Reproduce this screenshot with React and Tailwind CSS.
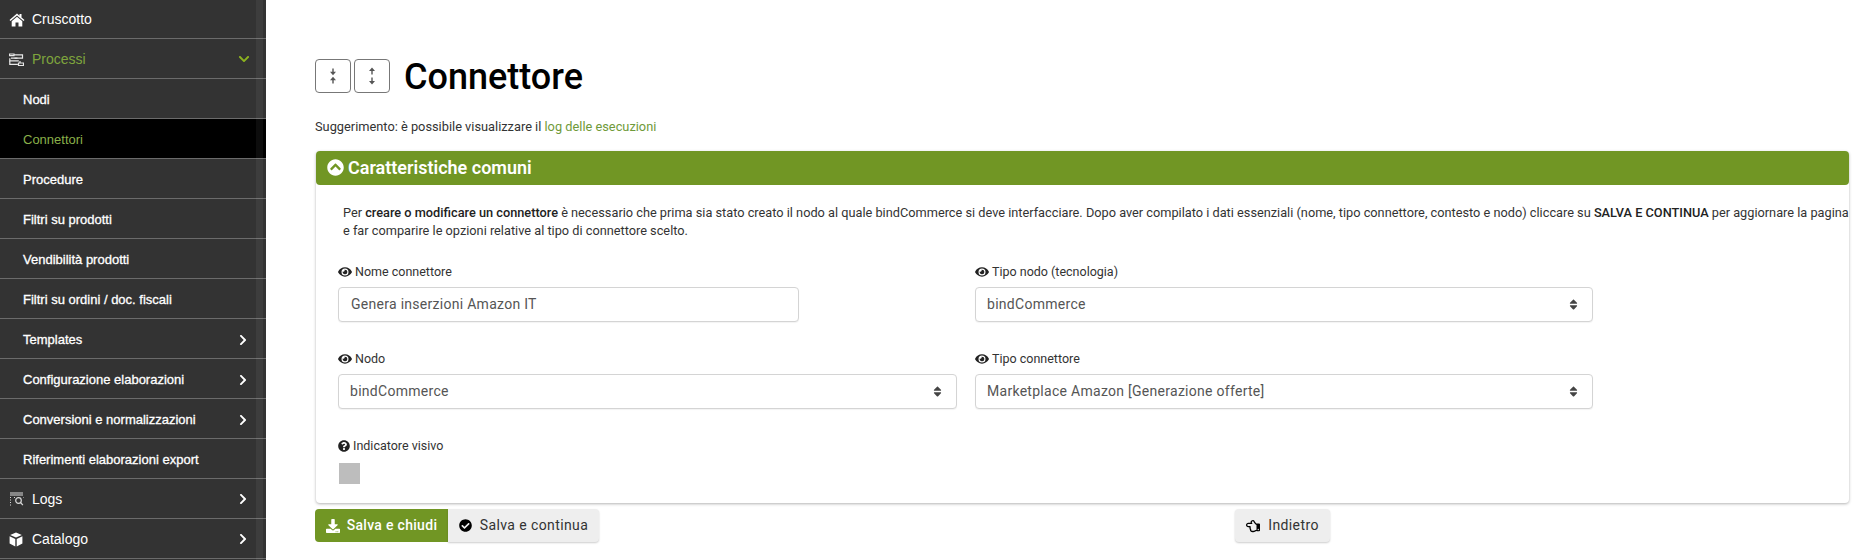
import React from 'react';
import { FaChevronDown, FaChevronRight, FaChevronCircleUp, FaEye, FaQuestionCircle, FaDownload, FaCheckCircle, FaRegHandPointLeft, FaSort } from 'react-icons/fa';

const HomeIcon = () => (
  <svg width="16" height="14" viewBox="0 0 16 14" fill="white">
    <path d="M8 0.5L0.5 7l1 1L8 2.6 14.5 8l1-1-3-2.6V1h-2v1.7zM2.7 8.2V13.5h3.8V9.5h3v4h3.8V8.2L8 3.8z" />
  </svg>
);

const ProcessIcon = () => (
  <svg width="15" height="13" viewBox="0 0 15 13" fill="none" stroke="#e8e8e8" strokeWidth="1.2">
    <path d="M0.5 1h4.5v1.6H0.5zM5 1.8h8.5v3.4H2" />
    <path d="M0.8 5.2v2.6h9" />
    <path d="M5.5 5.2h3" />
    <path d="M0.8 7.8v3.6h8M9.5 10h5v2.5h-5zM11 8v2" />
  </svg>
);

const LogsIcon = () => (
  <svg width="15" height="14" viewBox="0 0 15 14" fill="none" stroke="#d9d9d9" strokeWidth="1.2">
    <path d="M1 1h13M1 3h13" />
    <path d="M1 5.5h2M1 8h2M1 10.5h2M1 13h2" strokeDasharray="1 1" />
    <path d="M5 5.5h1M14 5.5h0.5" />
    <circle cx="9.5" cy="8.5" r="2.8" />
    <path d="M11.5 10.5l2.4 2.6" />
  </svg>
);

const BoxIcon = () => (
  <svg width="14" height="15" viewBox="0 0 14 15" fill="white">
    <path d="M7 0.5L12.8 3 7 5.6 1.2 3z" />
    <path d="M0.6 4.3L6.3 6.9V14.5L0.6 11.6zM13.4 4.3L7.7 6.9V14.5L13.4 11.6z" />
  </svg>
);

const CollapseIcon = () => (
  <svg width="10" height="18" viewBox="0 0 10 18" fill="#555">
    <path d="M4.3 1.5h1.4v3.2H8L5 8.3 2 4.7h2.3zM5 9.7l3 3.6H5.7v3.2H4.3v-3.2H2z" />
  </svg>
);

const ExpandIcon = () => (
  <svg width="10" height="18" viewBox="0 0 10 18" fill="#555">
    <path d="M5 0.5l3 3.6H5.7v3.4H4.3V4.1H2zM5 17.5l-3-3.6h2.3v-3.4h1.4v3.4H8z" />
  </svg>
);

const menu = [
  { label: 'Cruscotto', icon: <HomeIcon />, top: true, first: true },
  { label: 'Processi', icon: <ProcessIcon />, top: true, open: true },
  { label: 'Nodi' },
  { label: 'Connettori', active: true },
  { label: 'Procedure' },
  { label: 'Filtri su prodotti' },
  { label: 'Vendibilità prodotti' },
  { label: 'Filtri su ordini / doc. fiscali' },
  { label: 'Templates', arrow: true },
  { label: 'Configurazione elaborazioni', arrow: true },
  { label: 'Conversioni e normalizzazioni', arrow: true },
  { label: 'Riferimenti elaborazioni export' },
  { label: 'Logs', icon: <LogsIcon />, top: true, arrow: true },
  { label: 'Catalogo', icon: <BoxIcon />, top: true, arrow: true },
];

const MenuRow = ({ item }) => (
  <div
    className={`flex items-center border-b border-[#6b6b6b] shrink-0 ${item.top ? 'pt-[1px]' : 'pt-[2px]'} ${item.first ? 'h-[39px]' : 'h-[40px]'} ${item.active ? 'bg-black' : ''}`}
  >
    {item.top ? (
      <>
        <span className="w-[32px] pl-[9px] flex items-center shrink-0">{item.icon}</span>
        <span className={`text-[14px] ${item.open ? 'text-[#7fa53d]' : 'text-white'}`}>{item.label}</span>
      </>
    ) : (
      <span className={`pl-[23px] text-[13px] ${item.active ? 'text-[#8ab04a]' : 'text-white [-webkit-text-stroke:0.3px_white]'}`}>
        {item.label}
      </span>
    )}
    {item.open && <FaChevronDown className="ml-auto mr-[16px] text-[12px] text-[#8cb21f]" />}
    {item.arrow && <FaChevronRight className="ml-auto mr-[17px] text-[12px] text-white" />}
  </div>
);

const Sidebar = () => (
  <div className="relative w-[266px] h-[560px] overflow-hidden shrink-0 bg-[#333333] flex flex-col font-['Liberation_Sans',sans-serif]">
    {menu.map((item) => (
      <MenuRow key={item.label} item={item} />
    ))}
    <div className="absolute top-0 bottom-0 right-[3px] w-[7px] bg-white/5" />
  </div>
);

const Label = ({ icon, children }) => (
  <div className="flex items-center gap-[3px] h-[16px] text-[12.5px] text-[#333]">
    {icon === 'help' ? <FaQuestionCircle className="text-[12px] text-[#222]" /> : <FaEye className="text-[14px] text-[#222]" />}
    {children}
  </div>
);

const boxClass = 'h-[35px] bg-white border border-[#d4d4d4] rounded-[4px] flex items-center text-[14px] tracking-[0.28px] text-[#555] shadow-[0_1px_1px_rgba(0,0,0,0.05)]';

const SelectBox = ({ value }) => (
  <div className={`${boxClass} w-full pl-[11px] pr-[12px] justify-between`}>
    <span>{value}</span>
    <FaSort className="text-[13px] text-[#444]" />
  </div>
);

export default function App() {
  return (
    <div className="flex w-[1871px] h-[560px] overflow-hidden bg-white font-['Roboto',sans-serif]">
      <Sidebar />
      <div className="flex-1 min-w-0 pl-[49px] pr-[22px] pt-[58px]">
        <div className="flex items-center h-[35px]">
          <button className="w-[36px] h-[34px] border border-[#777] rounded-[4px] flex items-center justify-center">
            <CollapseIcon />
          </button>
          <button className="w-[36px] h-[34px] ml-[3px] border border-[#777] rounded-[4px] flex items-center justify-center">
            <ExpandIcon />
          </button>
          <h1 className="ml-[14px] mt-[2px] text-[36px] font-medium text-black leading-none">Connettore</h1>
        </div>

        <p className="mt-[26px] text-[12.8px] leading-[16px] text-[#333]">
          Suggerimento: è possibile visualizzare il <span className="text-[#6f9a3a]">log delle esecuzioni</span>
        </p>

        <div className="mt-[16px] ml-[1px] rounded-[4px] shadow-[0_1px_3px_rgba(0,0,0,0.3)] h-[352px]">
          <div className="h-[34px] pb-[2px] bg-[#719624] rounded-[4px] flex items-center pl-[11px] gap-[4px] text-white">
            <FaChevronCircleUp className="text-[17px]" />
            <span className="text-[18px] font-semibold">Caratteristiche comuni</span>
          </div>
          <div className="pl-[22px] pt-[19px]">
            <p className="pl-[5px] text-[12.75px] leading-[18px] text-[#333] whitespace-nowrap">
              Per <b className="font-medium text-[#222]">creare o modificare un connettore</b> è necessario che prima sia stato creato il nodo al quale bindCommerce si deve interfacciare. Dopo aver compilato i dati essenziali (nome, tipo connettore, contesto e nodo) cliccare su <b className="font-medium text-[#222]">SALVA E CONTINUA</b> per aggiornare la pagina
              <br />e far comparire le opzioni relative al tipo di connettore scelto.
            </p>

            <div className="mt-[24px] grid grid-cols-[619px_618px] gap-x-[18px] gap-y-[29px]">
              <div>
                <Label>Nome connettore</Label>
                <div className={`${boxClass} w-[461px] mt-[7px] pl-[12px]`}>Genera inserzioni Amazon IT</div>
              </div>
              <div>
                <Label>Tipo nodo (tecnologia)</Label>
                <div className="mt-[7px]">
                  <SelectBox value="bindCommerce" />
                </div>
              </div>
              <div>
                <Label>Nodo</Label>
                <div className="mt-[7px]">
                  <SelectBox value="bindCommerce" />
                </div>
              </div>
              <div>
                <Label>Tipo connettore</Label>
                <div className="mt-[7px]">
                  <SelectBox value="Marketplace Amazon [Generazione offerte]" />
                </div>
              </div>
            </div>

            <div className="mt-[29px]">
              <Label icon="help">Indicatore visivo</Label>
              <div className="mt-[9px] ml-[1px] w-[21px] h-[21px] bg-[#bdbdbd]" />
            </div>
          </div>
        </div>

        <div className="mt-[6px] flex items-start">
          <button className="h-[33px] w-[133px] bg-[#719624] rounded-l-[4px] flex items-center justify-center gap-[7px] text-[14px] tracking-[0.3px] font-medium text-white">
            <FaDownload className="text-[14px]" />
            Salva e chiudi
          </button>
          <button className="h-[33px] w-[151px] bg-[#eeeeee] rounded-r-[4px] flex items-center justify-center gap-[8px] text-[14px] tracking-[0.4px] text-[#333] shadow-[0_1px_2px_rgba(0,0,0,0.2)]">
            <FaCheckCircle className="text-[13px] text-black" />
            Salva e continua
          </button>
          <button className="ml-[636px] h-[33px] w-[95px] bg-[#eeeeee] rounded-[4px] flex items-center justify-center gap-[8px] text-[14px] tracking-[0.4px] text-[#333] shadow-[0_1px_2px_rgba(0,0,0,0.2)]">
            <FaRegHandPointLeft className="text-[14px] text-black" />
            Indietro
          </button>
        </div>
      </div>
    </div>
  );
}
